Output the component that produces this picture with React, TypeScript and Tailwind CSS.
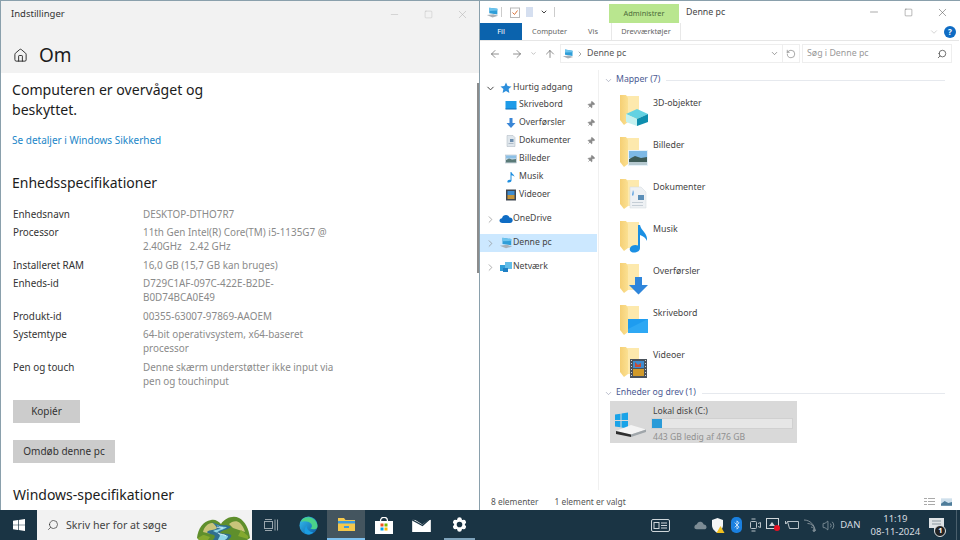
import * as React from 'react';
import { ArrowLeft, ArrowRight, ArrowUp, ChevronDown, ChevronRight, Home, Minus, Pin, RotateCw, Search, Settings, Square, X, Volume2, Bluetooth } from 'lucide-react';

const specs = [
  ['Enhedsnavn', ['DESKTOP-DTHO7R7']],
  ['Processor', ['11th Gen Intel(R) Core(TM) i5-1135G7 @', '2.40GHz   2.42 GHz']],
  ['Installeret RAM', ['16,0 GB (15,7 GB kan bruges)']],
  ['Enheds-id', ['D729C1AF-097C-422E-B2DE-', 'B0D74BCA0E49']],
  ['Produkt-id', ['00355-63007-97869-AAOEM']],
  ['Systemtype', ['64-bit operativsystem, x64-baseret', 'processor']],
  ['Pen og touch', ['Denne skærm understøtter ikke input via', 'pen og touchinput']],
] as const;

function PcIcon({ size = 14 }: { size?: number }) {
  return (
    <svg width={size} height={size} viewBox="0 0 16 16">
      <path d="M4 2l10 1.500v7L4 9z" fill="#2f9ed8" />
      <path d="M4 2l10 1.500v2L4 6z" fill="#6cc4ee" />
      <path d="M1 11l8-1 6 2-7 2z" fill="#a8b0b8" />
    </svg>
  );
}

function SmallIcon({ name }: { name: string }) {
  if (name === 'star')
    return (
      <svg width="12" height="12" viewBox="0 0 12 12">
        <path d="M6 .5l1.600 3.600 3.900.4-2.900 2.600.8 3.900L6 9l-3.400 2 .8-3.900L.5 4.500l3.900-.4z" fill="#2d8fdc" />
      </svg>
    );
  if (name === 'desk')
    return (
      <svg width="12" height="12" viewBox="0 0 12 12">
        <rect x="0.500" y="2" width="11" height="8" fill="#1e9be8" />
        <rect x="0.500" y="9.500" width="11" height="1" fill="#0e6fb8" />
      </svg>
    );
  if (name === 'down')
    return (
      <svg width="12" height="12" viewBox="0 0 12 12">
        <path d="M4.500 1h3v5H10.500L6 11 1.500 6h3z" fill="#3a86d6" />
      </svg>
    );
  if (name === 'doc')
    return (
      <svg width="12" height="12" viewBox="0 0 12 12">
        <path d="M2 .5h6l2 2v9H2z" fill="#dfe6ec" stroke="#a9b4be" strokeWidth=".5" />
        <rect x="5" y="4" width="3.500" height="3" fill="#6d8fb0" />
        <rect x="3.500" y="8" width="5" height="1" fill="#b0bcc8" />
      </svg>
    );
  if (name === 'pic')
    return (
      <svg width="12" height="12" viewBox="0 0 12 12">
        <rect x="0.500" y="2" width="11" height="8" fill="#d7e6f0" stroke="#a9b4be" strokeWidth=".5" />
        <rect x="1" y="2.500" width="10" height="3" fill="#8cc0e6" />
        <path d="M1 7l3-1.500 3 1 4-.5v3.500H1z" fill="#5a7a78" />
      </svg>
    );
  if (name === 'music')
    return (
      <svg width="12" height="12" viewBox="0 0 12 12">
        <path d="M5.500 1h1c.2 2 3 2.500 3 5-.6-1-1.800-1.500-3-1.700V9.500c0 1.300-1.300 2-2.800 2S2 10.600 2.800 9.500c.6-.8 1.800-1 2.700-.6z" fill="#1f8fe0" />
      </svg>
    );
  if (name === 'video')
    return (
      <svg width="12" height="12" viewBox="0 0 12 12">
        <rect x="1" y="0.500" width="10" height="11" fill="#3e4650" />
        <rect x="2.500" y="2" width="7" height="4" fill="#3f8ccf" />
        <rect x="2.500" y="6" width="7" height="4" fill="#c7953a" />
      </svg>
    );
  if (name === 'cloud')
    return (
      <svg width="14" height="12" viewBox="0 0 14 12">
        <path d="M3.500 10C1.500 10 .5 8.800.5 7.500S1.500 5.200 3 5.200C3.500 3.200 5 2 7 2c1.800 0 3 1 3.500 2.500 2 0 3.200 1.300 3.200 2.800S12.500 10 11 10z" fill="#0f6cc4" />
      </svg>
    );
  if (name === 'pc') return <PcIcon size={14} />;
  return (
    <svg width="14" height="12" viewBox="0 0 14 12">
      <rect x="1" y="4" width="6" height="6" fill="#2f9ed8" />
      <rect x="6" y="1" width="7" height="7" fill="#63bde8" />
      <rect x="4" y="7" width="5" height="4" fill="#1f7fc4" />
    </svg>
  );
}

function NavRow({ icon, label, pinned, selected, chevron, indent }: { icon: string; label: string; pinned?: boolean; selected?: boolean; chevron?: 'open' | 'closed'; indent?: boolean }) {
  return (
    <div className={`flex h-[18px] w-[117px] items-center ${selected ? 'bg-[#cce8ff]' : ''}`}>
      <div className="flex w-[19px] shrink-0 justify-center pl-[1px] text-[#8a8a8a]">
        {chevron === 'open' && <ChevronDown size={11} strokeWidth={2} className="text-[#333]" />}
        {chevron === 'closed' && <ChevronRight size={11} strokeWidth={1.5} />}
      </div>
      <div className={`flex w-[14px] shrink-0 justify-center ${indent ? 'ml-[5px]' : ''}`}>
        <SmallIcon name={icon} />
      </div>
      <span className={`whitespace-nowrap text-[8.7px] text-[#444] ${indent ? 'ml-[1px]' : ''}`}>{label}</span>
      {pinned && <Pin size={8} className="ml-auto mr-[2px] rotate-45 fill-[#888] text-[#888]" />}
    </div>
  );
}

function FolderArt({ kind }: { kind: string }) {
  return (
    <svg width="29" height="32" viewBox="0 0 29 32" className="shrink-0">
      <defs>
        <linearGradient id="folderFront" x1="0" y1="0" x2="1" y2="0">
          <stop offset="0" stopColor="#f5cf74" />
          <stop offset="1" stopColor="#fbe092" />
        </linearGradient>
      </defs>
      <path d="M6 1h13v26H6z" fill="#fde9ad" />
      <path d="M0 0h6l2 3v24l-4 3-4-5z" fill="url(#folderFront)" />
      {kind === '3d' && (
        <g>
          <path d="M6 19l11-5 11 5-11 5z" fill="#63d2e2" />
          <path d="M6 19l11 5v7L6 27z" fill="#c4f1f0" />
          <path d="M17 24l11-5v8l-11 4z" fill="#0e8eae" />
        </g>
      )}
      {kind === 'pic' && (
        <g>
          <rect x="8" y="13" width="20" height="16" fill="#e6f2fa" />
          <rect x="9" y="14" width="18" height="7" fill="#7db9e6" />
          <path d="M9 22l6-3 6 2 6-1v6H9z" fill="#3e5c58" />
          <rect x="9" y="25" width="18" height="3" fill="#b6c9d0" />
        </g>
      )}
      {kind === 'doc' && (
        <g>
          <path d="M10 8h11l5 5v16H10z" fill="#eef1f4" stroke="#d3d9df" strokeWidth=".5" />
          <rect x="18" y="16" width="6" height="5" fill="#5c8fb8" />
          <path d="M13 11c1 2 1 4 0 6l-1-1z" fill="#5aa0e0" />
          <rect x="12" y="23" width="11" height="1" fill="#c5ced6" />
          <rect x="12" y="26" width="11" height="1" fill="#c5ced6" />
        </g>
      )}
      {kind === 'music' && <path d="M18 4h2c1 6 8 8 7 16-1-3-4-5-7-6v13c0 3-3 4.500-6 4.500s-5-2-4-4.500 5-4 8-2.500z" fill="#1a8fe3" />}
      {kind === 'down' && <path d="M15 14h7v8h6l-9.500 9.500L9 22h6z" fill="#2f86db" />}
      {kind === 'desk' && (
        <g>
          <rect x="8" y="14" width="20" height="14" fill="#1e9cf0" />
          <path d="M8 24l20-10v14H8z" fill="#2ea8f4" />
        </g>
      )}
      {kind === 'video' && (
        <g>
          <rect x="10" y="12" width="17" height="19" fill="#4a525c" />
          <rect x="13" y="14" width="11" height="7" fill="#3f8ccf" />
          <rect x="13" y="22" width="11" height="7" fill="#d19a2a" />
          <path d="M15 15l3 3 3-2v4h-6z" fill="#c94a34" />
          <path d="M11 13h1v1h-1zM11 16h1v1h-1zM11 19h1v1h-1zM11 22h1v1h-1zM11 25h1v1h-1zM11 28h1v1h-1zM25 13h1v1h-1zM25 16h1v1h-1zM25 19h1v1h-1zM25 22h1v1h-1zM25 25h1v1h-1zM25 28h1v1h-1z" fill="#cfd4d9" />
        </g>
      )}
    </svg>
  );
}

function GroupHeading({ label, className = '' }: { label: string; className?: string }) {
  return (
    <div className={`flex h-[16px] items-center ${className}`}>
      <ChevronDown size={9} strokeWidth={1.5} className="ml-[5px] text-[#8a8fa8]" />
      <span className="ml-[3px] whitespace-nowrap text-[8.7px] text-[#4b5a93]">{label}</span>
      <div className="ml-[6px] mr-[14px] h-px flex-1 bg-[#e6e9ee]" />
    </div>
  );
}

function LeftWindow() {
  return (
    <div className="relative flex h-full w-[479px] flex-col overflow-hidden border-l border-[#8aa0ac] bg-white text-[#1c1c1c]">
      <div className="h-[72px] bg-[#f2f2f2]">
        <div className="flex h-[26px] items-center pl-[10px] text-[9.5px] text-[#333]">
          <span>Indstillinger</span>
          <div className="ml-auto flex w-[102px] items-center text-[#b0b0b0]">
            <span className="flex w-[34px] justify-center"><Minus size={11} strokeWidth={1} /></span>
            <span className="flex w-[34px] justify-center"><Square size={9} strokeWidth={1} /></span>
            <span className="flex w-[34px] justify-center"><X size={13} strokeWidth={1} /></span>
          </div>
        </div>
        <div className="flex h-[46px] items-center pl-[12px] pt-[10px]">
          <Home size={15} strokeWidth={1.4} />
          <span className="ml-[11px] text-[19px]">Om</span>
        </div>
      </div>
      <div className="flex flex-col pl-[11px] pt-[7px]">
        <div className="text-[14.1px] leading-[20px]">
          Computeren er overvåget og
          <br />
          beskyttet.
        </div>
        <div className="mt-[12px] h-[16px] text-[10px] leading-[16px] text-[#1a86c8]">Se detaljer i Windows Sikkerhed</div>
        <div className="mt-[25px] text-[14px] leading-[20px]">Enhedsspecifikationer</div>
        <div className="mt-[14px] grid grid-cols-[130px_1fr] gap-y-[4.45px] pl-[1px] text-[9.9px] leading-[14px]">
          {specs.map(([name, lines]) => (
            <React.Fragment key={name}>
              <div className="text-[#333]">{name}</div>
              <div className="whitespace-pre text-[#8a8a8a]">
                {lines.map((l) => (
                  <div key={l}>{l}</div>
                ))}
              </div>
            </React.Fragment>
          ))}
        </div>
        <div className="ml-[1px] mt-[12px] flex h-[23px] w-[67px] items-center justify-center bg-[#cccccc] text-[10px] text-[#333]">Kopiér</div>
        <div className="ml-[1px] mt-[17px] flex h-[23px] w-[102px] items-center justify-center bg-[#cccccc] text-[10px] text-[#333]">Omdøb denne pc</div>
        <div className="ml-[1px] mt-[22px] text-[14px] leading-[20px]">Windows-specifikationer</div>
      </div>
      <div className="absolute right-0 top-[82px] h-[190px] w-[2px] bg-[#8c8c8c]" />
    </div>
  );
}

function RightWindow() {
  const folders = [
    ['3d', '3D-objekter'],
    ['pic', 'Billeder'],
    ['doc', 'Dokumenter'],
    ['music', 'Musik'],
    ['down', 'Overførsler'],
    ['desk', 'Skrivebord'],
    ['video', 'Videoer'],
  ];
  return (
    <div className="flex h-full w-[480px] flex-col border-l border-[#8aa0ac] bg-white text-[#444]">
      <div className="flex h-[22px]">
        <div className="flex w-[129px] items-center pl-[6px]">
          <PcIcon size={13} />
          <div className="ml-[2px] h-[10px] w-px bg-[#ccc]" />
          <svg width="10" height="11" viewBox="0 0 10 11" className="ml-[8px]">
            <rect x=".5" y="1" width="9" height="9.500" fill="#fff" stroke="#b8b8b8" />
            <path d="M2.500 5.500l2 2 3-4" fill="none" stroke="#d9733a" />
          </svg>
          <div className="ml-[6px] h-[10px] w-[7px] bg-[#d5dff0]" />
          <ChevronDown size={8} strokeWidth={3} className="ml-[7px] text-[#444]" />
          <div className="ml-[6px] h-[10px] w-px bg-[#ccc]" />
        </div>
        <div className="mt-[3px] flex h-[19px] w-[70px] items-center justify-center bg-[#b9e68f] text-[7.4px] text-[#4c6a3a]">Administrer</div>
        <span className="ml-[7px] mt-[1px] self-center text-[8.8px] text-[#444]">Denne pc</span>
        <div className="ml-auto flex w-[102px] items-center text-[#555]">
          <span className="flex w-[34px] justify-center"><Minus size={12} strokeWidth={1} /></span>
          <span className="flex w-[34px] justify-center"><Square size={9} strokeWidth={1.1} /></span>
          <span className="flex w-[34px] justify-center"><X size={13} strokeWidth={1} /></span>
        </div>
      </div>
      <div className="flex h-[18px] items-center border-b border-[#e6e6e6] text-[7.4px] text-[#666]">
        <div className="flex h-[17px] w-[42px] items-center justify-center bg-[#0b63ad] text-white">Fil</div>
        <span className="ml-[10px]">Computer</span>
        <span className="ml-[21px]">Vis</span>
        <div className="ml-[13px] flex h-[17px] w-[70px] items-center justify-center border-x border-[#e8e8e8]">Drevværktøjer</div>
        <ChevronDown size={10} strokeWidth={1} className="ml-auto mr-[5px] text-[#999]" />
        <div className="mr-[3px] flex h-[12px] w-[12px] items-center justify-center rounded-full bg-[#0f6cc4] text-[8px] font-bold text-white">?</div>
      </div>
      <div className="flex h-[29px] items-center pb-[4px] text-[#555]">
        <ArrowLeft size={12} strokeWidth={1.3} className="ml-[9px]" />
        <ArrowRight size={12} strokeWidth={1.3} className="ml-[10px]" />
        <ChevronDown size={7} strokeWidth={2} className="ml-[7px] text-[#999]" />
        <ArrowUp size={12} strokeWidth={1.3} className="ml-[7px]" />
        <div className="ml-[4px] flex h-[19px] w-[240px] items-center border border-[#eeeeee]">
          <div className="ml-[1px]"><PcIcon size={12} /></div>
          <ChevronRight size={8} strokeWidth={1.5} className="ml-[2px]" />
          <span className="ml-[3px] text-[8.8px] text-[#555]">Denne pc</span>
          <ChevronDown size={9} strokeWidth={1.5} className="ml-auto" />
          <div className="ml-[3px] h-full w-px bg-[#eee]" />
          <RotateCw size={10} strokeWidth={1.2} className="mx-[3px] -scale-x-100" />
        </div>
        <div className="ml-[2px] flex h-[19px] w-[150px] items-center border border-[#eeeeee] pl-[4px] text-[8.8px] text-[#999]">
          Søg i Denne pc
          <Search size={10} strokeWidth={2} className="ml-auto mr-[4px] -scale-x-100 text-[#555]" />
        </div>
      </div>
      <div className="flex flex-1 overflow-hidden">
        <div className="flex w-[119px] shrink-0 flex-col border-r border-[#f0f0f0] pt-[10px]">
          <div className="h-[16px]">
            <div className="-mt-[1px]">
              <NavRow icon="star" label="Hurtig adgang" chevron="open" />
            </div>
          </div>
          <NavRow icon="desk" label="Skrivebord" pinned indent />
          <NavRow icon="down" label="Overførsler" pinned indent />
          <NavRow icon="doc" label="Dokumenter" pinned indent />
          <NavRow icon="pic" label="Billeder" pinned indent />
          <NavRow icon="music" label="Musik" indent />
          <NavRow icon="video" label="Videoer" indent />
          <div className="h-[6px]" />
          <NavRow icon="cloud" label="OneDrive" chevron="closed" />
          <div className="h-[6px]" />
          <NavRow icon="pc" label="Denne pc" chevron="closed" selected />
          <div className="h-[6px]" />
          <NavRow icon="net" label="Netværk" chevron="closed" />
        </div>
        <div className="flex-1 pt-[2px]">
          <GroupHeading label="Mapper (7)" />
          <div className="pl-[21px] pt-[7px]">
            {folders.map(([kind, label]) => (
              <div key={kind} className="flex h-[42px] items-start">
                <FolderArt kind={kind} />
                <span className="ml-[4px] text-[8.8px] leading-[16px] text-[#444]">{label}</span>
              </div>
            ))}
          </div>
          <GroupHeading label="Enheder og drev (1)" className="-mt-[4px]" />
          <div className="ml-[11px] flex h-[42px] w-[187px] items-center bg-[#d9d9d9]">
            <svg width="33" height="30" viewBox="0 0 33 30" className="ml-[4px] shrink-0">
              <path d="M1 7.500l5.500-.8V13H1zM7.500 6.500L14 5.500V13H7.500zM1 14h5.500v6.300L1 19.500zM7.500 14H14v7.500l-6.500-1z" fill="#19a3e8" />
              <path d="M2 24l15-6 15 4.500-15 5z" fill="#f4f4f4" />
              <path d="M2 24l15 3.500V30L2 27z" fill="#2e2e2e" />
              <path d="M17 27.500l15-5V25l-15 5z" fill="#a0a6aa" />
            </svg>
            <div className="ml-[4px] flex w-[142px] flex-col pt-[4px]">
              <span className="pl-[2px] text-[8.6px] leading-[13px] text-[#444]">Lokal disk (C:)</span>
              <div className="h-[11px] w-full border border-[#d0d0d0] bg-[#e6e6e6]">
                <div className="h-full w-[10px] bg-[#2a9bd8]" />
              </div>
              <span className="mt-[2px] pl-[2px] text-[8.6px] leading-[13px] text-[#909090]">443 GB ledig af 476 GB</span>
            </div>
          </div>
        </div>
      </div>
      <div className="flex h-[20px] shrink-0 items-center pt-[4px] text-[8.4px] text-[#555]">
        <span className="ml-[11px]">8 elementer</span>
        <span className="ml-[16px]">1 element er valgt</span>
        <svg width="11" height="10" viewBox="0 0 11 10" className="ml-auto">
          <path d="M0 1h3v1H0zM4 1h7v1H4zM0 4h3v1H0zM4 4h7v1H4zM0 7h3v1H0zM4 7h7v1H4z" fill="#a9a9a9" />
        </svg>
        <svg width="11" height="10" viewBox="0 0 12 10" className="ml-[6px] mr-[7px]">
          <rect y="1" width="12" height="8" fill="#cfe0ec" />
          <path d="M0 7l4-3 4 2 4-1v4H0z" fill="#4f7d9a" />
        </svg>
      </div>
    </div>
  );
}

function TrayCell({ children }: { children: React.ReactNode }) {
  return <div className="flex h-full w-[18.3px] shrink-0 items-center justify-center">{children}</div>;
}

function Taskbar() {
  return (
    <div className="flex h-[30px] w-full items-center bg-[#1a3444] text-white">
      <div className="flex h-full w-[37px] shrink-0 items-center justify-center">
        <svg width="12" height="12" viewBox="0 0 12 12">
          <path d="M0 1.700l5-.7v4.700H0zM5.700.9L12 0v5.700H5.700zM0 6.300h5v4.700l-5-.7zM5.700 6.300H12V12l-6.300-.9z" fill="#fff" />
        </svg>
      </div>
      <div className="flex h-full w-[215px] shrink-0 items-center overflow-hidden bg-[#f2f2f2] pl-[10px] text-[10.7px] text-[#444]">
        <Search size={12} strokeWidth={1.4} className="-scale-x-100 text-[#333]" />
        <span className="ml-[7px] whitespace-nowrap">Skriv her for at søge</span>
        <svg width="53" height="26" viewBox="0 0 53 26" className="ml-auto mr-[2px] mt-[4px] shrink-0">
          <path d="M0 24C1 15 6 7 14 6c4-1 7 1 10 4 4-6 12-9 18-6 6 3 10 11 11 20l-3 2H2z" fill="#5f8f2c" />
          <path d="M6 18c1-5 5-9 9-9 3 0 6 2 7 5l-8 6zM32 10c3-3 8-4 11-1 2 2 4 5 5 9l-12-4z" fill="#c9c47a" />
          <path d="M1 24c2-1 4-3 6-3l6 2-2 3H2zM44 16l7 6v3l-10-3z" fill="#84a92f" />
          <path d="M15 8c4 2 9 4 14 3 2 1 4 1 5 2-3 3-10 3-11 6 3 1 9 0 11 2 1 2-1 3-3 5H16c1-2 3-3 1-5-2-1-6-1-7-3 3-3 7-1 10-4-1-2-3-4-5-6z" fill="#2f6f8f" />
          <path d="M18 10c3 2 7 3 12 3-3 3-9 3-10 6 3 2 8 1 11 3 0 2-2 3-3 4h-7c1-3 3-4 1-6-2-2-5-2-6-3 3-2 7-1 8-3z" fill="#8fd6e6" />
          <path d="M21 19c3 2 6 1 8 3M20 13c2 1 4 1 6 1" stroke="#e8f7fa" strokeWidth=".9" fill="none" />
        </svg>
      </div>
      <div className="flex h-full w-[37.7px] shrink-0 items-center justify-center">
        <svg width="14" height="12" viewBox="0 0 14 12" fill="none" stroke="#9aa6ad">
          <rect x=".5" y="2.500" width="8" height="7" />
          <path d="M1 .5h7M1 11.500h7M11 .5v11M13.500 .5v11" />
        </svg>
      </div>
      <div className="flex h-full w-[37.7px] shrink-0 items-center justify-center">
        <svg width="19" height="19" viewBox="0 0 20 20">
          <defs>
            <linearGradient id="edgeA" x1="0" y1="0" x2="1" y2="1">
              <stop offset="0" stopColor="#35c1f1" />
              <stop offset="1" stopColor="#0c59a4" />
            </linearGradient>
          </defs>
          <circle cx="10" cy="10" r="9.500" fill="url(#edgeA)" />
          <path d="M2 6c2-5 9-6 13-3 3 2 4.500 5 4.500 8 0 2-2 3-4.500 3-2 0-3-1-3-1 2-.5 2-3.500.5-5C10 5 5 5 2 6z" fill="#4bd18a" />
          <path d="M8 10c0 4 3 7 7 7-1 1.500-3.500 2.500-5.500 2.500C6 19.500 4 15 8 10z" fill="#1b9de2" />
        </svg>
      </div>
      <div className="flex h-full w-[37.7px] shrink-0 flex-col items-center justify-center border-b-2 border-[#7cc0ef] bg-[#44555f]">
        <svg width="17" height="14" viewBox="0 0 17 14">
          <path d="M0 1h6l1.500 2H17v11H0z" fill="#f5c84c" />
          <rect y="4" width="17" height="2.500" fill="#3d9be0" />
          <rect x="6" y="9" width="5" height="2" fill="#3d9be0" />
        </svg>
      </div>
      <div className="flex h-full w-[37.7px] shrink-0 items-center justify-center">
        <svg width="18" height="17" viewBox="0 0 18 17">
          <path d="M0 4h18v13H0z" fill="#fff" />
          <path d="M5.500 4c0-5 7-5 7 0" fill="none" stroke="#fff" strokeWidth="1.300" />
          <rect x="5.500" y="6.500" width="3" height="3" fill="#f25022" />
          <rect x="9.500" y="6.500" width="3" height="3" fill="#7fba00" />
          <rect x="5.500" y="10.500" width="3" height="3" fill="#00a4ef" />
          <rect x="9.500" y="10.500" width="3" height="3" fill="#ffb900" />
        </svg>
      </div>
      <div className="flex h-full w-[37.7px] shrink-0 items-center justify-center">
        <svg width="19" height="14" viewBox="0 0 20 15">
          <path d="M0 2h20v13H0z" fill="#fff" />
          <path d="M0 2l11 6 9-8" fill="none" stroke="#1a3444" strokeWidth="1.300" />
          <path d="M0 0h20L11 7z" fill="#1a3444" />
        </svg>
      </div>
      <div className="flex h-full w-[37.7px] shrink-0 items-center justify-center">
        <div className="flex h-full w-[31px] items-center justify-center border-b-2 border-[#7fa3bb]">
          <Settings size={15} strokeWidth={3} className="fill-white text-white [&>circle]:fill-[#1a3444] [&>circle]:stroke-[#1a3444]" />
        </div>
      </div>
      <div className="ml-auto flex h-full w-[317px] items-center text-[#d8dde0]">
        <div className="flex h-full w-[34px] items-center justify-center">
          <svg width="19" height="13" viewBox="0 0 19 13" fill="none" stroke="#cfd6da">
            <rect x=".5" y=".5" width="18" height="12" rx="1.500" />
            <rect x="3" y="3.500" width="5" height="6" />
            <path d="M10 4h6M10 6.500h6M10 9h6" />
          </svg>
        </div>
        <div className="w-[14px]" />
        <TrayCell>
          <svg width="13" height="10" viewBox="0 0 14 10">
            <path d="M3 9.500C1 9.500 0 8 .5 6.500S2 4.500 3 4.500C3.500 2 5.500 1 7.500 1.500 9.500 2 10 3.500 10.500 4.500c2 0 3 1.500 3 2.800S12.500 9.500 11 9.500z" fill="#7d8c95" />
          </svg>
        </TrayCell>
        <TrayCell>
          <svg width="14" height="15" viewBox="0 0 14 15">
            <path d="M1 2l5.500-2L12 2v5c0 4-3 6.500-5.500 8C4 13.500 1 11 1 7z" fill="#f4f6f7" />
            <path d="M9.500 8l4 7h-8z" fill="#f0c020" />
          </svg>
        </TrayCell>
        <TrayCell>
          <div className="flex h-[16px] w-[11px] items-center justify-center rounded-[5px] bg-[#1a80e0]">
            <Bluetooth size={10} strokeWidth={1.6} className="text-white" />
          </div>
        </TrayCell>
        <TrayCell>
          <svg width="12" height="14" viewBox="0 0 12 14" fill="none" stroke="#b8c2c8">
            <rect x="1.500" y="3.500" width="6" height="7" rx="1" />
            <path d="M9 5.500l2.500-1v5L9 8.500M2.500 1h4M2.500 13h4" />
          </svg>
        </TrayCell>
        <TrayCell>
          <svg width="15" height="14" viewBox="0 0 15 14">
            <rect x=".5" y=".5" width="12" height="10" fill="none" stroke="#cfd6da" />
            <path d="M3 8l3-4 3 4z" fill="#cfd6da" />
            <circle cx="11" cy="10" r="3" fill="#e81123" />
          </svg>
        </TrayCell>
        <TrayCell>
          <svg width="14" height="10" viewBox="0 0 14 10" fill="none" stroke="#b8c2c8">
            <path d="M2.500 1.500h11v7h-9zM.5 1v3M2.500 1.500L1 4" />
          </svg>
        </TrayCell>
        <TrayCell>
          <svg width="13" height="13" viewBox="0 0 13 13" fill="none" stroke="#7f8d96">
            <path d="M12 12C12 6 7 1 1 1M12 12C12 8 9 4.500 4.500 4.500M12 12c0-2-2-4-4-4" />
            <circle cx="11" cy="11.500" r="1" fill="#7f8d96" />
          </svg>
        </TrayCell>
        <TrayCell>
          <Volume2 size={13} strokeWidth={1} className="text-[#c8d0d5]" />
        </TrayCell>
        <div className="w-[26px] text-center text-[9.5px]">DAN</div>
        <div className="flex w-[64px] flex-col items-center text-[9.5px] leading-[13px]">
          <span>11:19</span>
          <span>08-11-2024</span>
        </div>
        <div className="relative flex h-full w-[18px] items-center justify-center">
          <svg width="15" height="14" viewBox="0 0 15 14">
            <path d="M0 0h15v10H8l-3 3.500V10H0z" fill="#dfe3e6" />
            <path d="M3 3h9M3 6h9" stroke="#8a979f" />
          </svg>
          <span className="absolute bottom-[3px] right-[-1px] flex h-[12px] w-[12px] items-center justify-center rounded-full border border-[#dfe3e6] bg-[#222] text-[7.5px] font-bold text-white">1</span>
        </div>
        <div className="ml-auto mr-[3px] h-full w-px bg-[#4a5f6c]" />
      </div>
    </div>
  );
}

export default function App() {
  return (
    <div className="flex h-[540px] w-[960px] flex-col overflow-hidden bg-white font-['Noto_Sans',sans-serif]">
      <div className="flex h-[510px] border-t border-[#8aa0ac]">
        <LeftWindow />
        <RightWindow />
      </div>
      <Taskbar />
    </div>
  );
}
